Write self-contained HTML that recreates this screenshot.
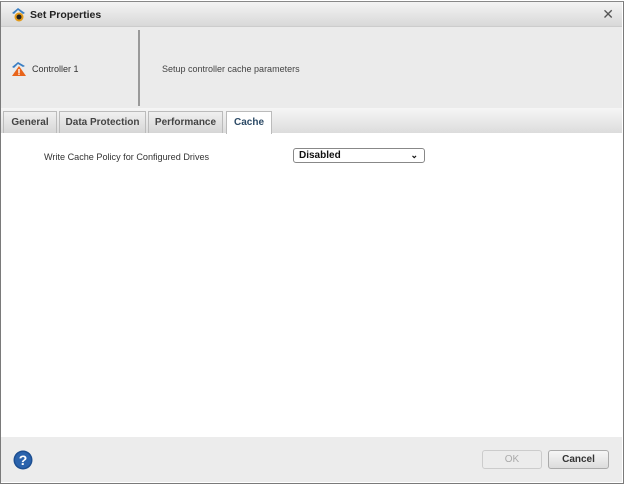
<!DOCTYPE html>
<html><head><style>
*{margin:0;padding:0;box-sizing:border-box}
body{width:624px;height:484px;background:#fff;font-family:"Liberation Sans",sans-serif;font-size:11px;color:#333;position:relative;overflow:hidden}
.frame{position:absolute;left:0;top:1px;width:624px;height:483px;border:1px solid #7a7a7a;border-top:1px solid #888;background:#fff}
.title{position:absolute;left:1px;top:2px;width:621px;height:25px;background:linear-gradient(#f4f4f4,#d8d8d8);border-bottom:1px solid #ccc}
.title span{position:absolute;left:29px;top:7px;font-weight:bold;font-size:10.5px;color:#222}
.x{position:absolute;right:8px;top:4px;font-size:14px;color:#555}
.hdr{position:absolute;left:1px;top:27px;width:621px;height:81px;background:#ebebeb}
.div{position:absolute;left:138px;top:30px;width:2px;height:76px;background:#999}
.ctl{position:absolute;left:32px;top:64px;font-size:9px;color:#333}
.desc{position:absolute;left:162px;top:64px;font-size:9px;color:#444}
.tabs{position:absolute;left:1px;top:108px;width:621px;height:25px;background:linear-gradient(#f6f6f6,#dcdcdc)}
.tab{position:absolute;top:111px;height:22px;border:1px solid #bbb;border-bottom:none;background:linear-gradient(#f0f0f0,#d6d6d6);font-weight:bold;font-size:10px;color:#444;text-align:center;line-height:21px}
.tab.a{background:#fff;color:#2c4a66;height:23px}
.lbl{position:absolute;left:44px;top:152px;font-size:9.1px;color:#333}
.sel{position:absolute;left:293px;top:148px;width:132px;height:15px;border:1px solid #888;border-radius:3px;background:#fff;font-weight:bold;font-size:10px;padding-left:5px;line-height:13px;color:#111}
.sel i{position:absolute;right:6px;top:0;font-style:normal;font-size:9px}
.foot{position:absolute;left:1px;top:437px;width:621px;height:45px;background:#ececec}
.btn{position:absolute;top:450px;height:19px;border:1px solid #aaa;border-radius:3px;background:linear-gradient(#f6f6f6,#dcdcdc);font-size:10px;text-align:center;line-height:17px;font-weight:bold;color:#333}
</style></head><body>
<div class="frame"></div>
<div class="title">
<svg style="position:absolute;left:10px;top:5px" width="16" height="16" viewBox="0 0 16 16"><path d="M1 6 L7 1 L14 6 L12 7 L7 3 L3 7Z" fill="#3b7fc4"/><circle cx="8" cy="10" r="4.5" fill="#e39a1a"/><circle cx="8" cy="10" r="2.5" fill="#222"/></svg>
<span>Set Properties</span><div class="x">✕</div></div>
<div class="hdr"></div>
<div class="div"></div>
<svg style="position:absolute;left:11px;top:61px" width="16" height="16" viewBox="0 0 16 16"><path d="M1 6 L7 1 L14 5 L12 6 L7 3 L3 7Z" fill="#3b7fc4"/><path d="M8 5 L15 15 L1 15Z" fill="#e8641a"/><rect x="7.3" y="8" width="1.4" height="4" fill="#fff"/><rect x="7.3" y="12.5" width="1.4" height="1.4" fill="#fff"/></svg>
<div class="ctl">Controller 1</div>
<div class="desc">Setup controller cache parameters</div>
<div class="tabs"></div>
<div class="tab" style="left:3px;width:54px">General</div>
<div class="tab" style="left:59px;width:87px">Data Protection</div>
<div class="tab" style="left:148px;width:75px">Performance</div>
<div class="tab a" style="left:226px;width:46px">Cache</div>
<div class="lbl">Write Cache Policy for Configured Drives</div>
<div class="sel">Disabled<i>⌄</i></div>
<div class="foot"></div>
<svg style="position:absolute;left:13px;top:450px" width="20" height="20" viewBox="0 0 20 20"><circle cx="10" cy="10" r="9.5" fill="#1d4f91"/><circle cx="10" cy="10" r="8" fill="#2a63ad"/><text x="10" y="15" text-anchor="middle" font-family="Liberation Sans" font-weight="bold" font-size="14" fill="#fff">?</text></svg>
<div class="btn" style="left:482px;width:60px;color:#aaa;font-weight:normal;border-color:#ccc;background:#ececec">OK</div>
<div class="btn" style="left:548px;width:61px">Cancel</div>
</body></html>
